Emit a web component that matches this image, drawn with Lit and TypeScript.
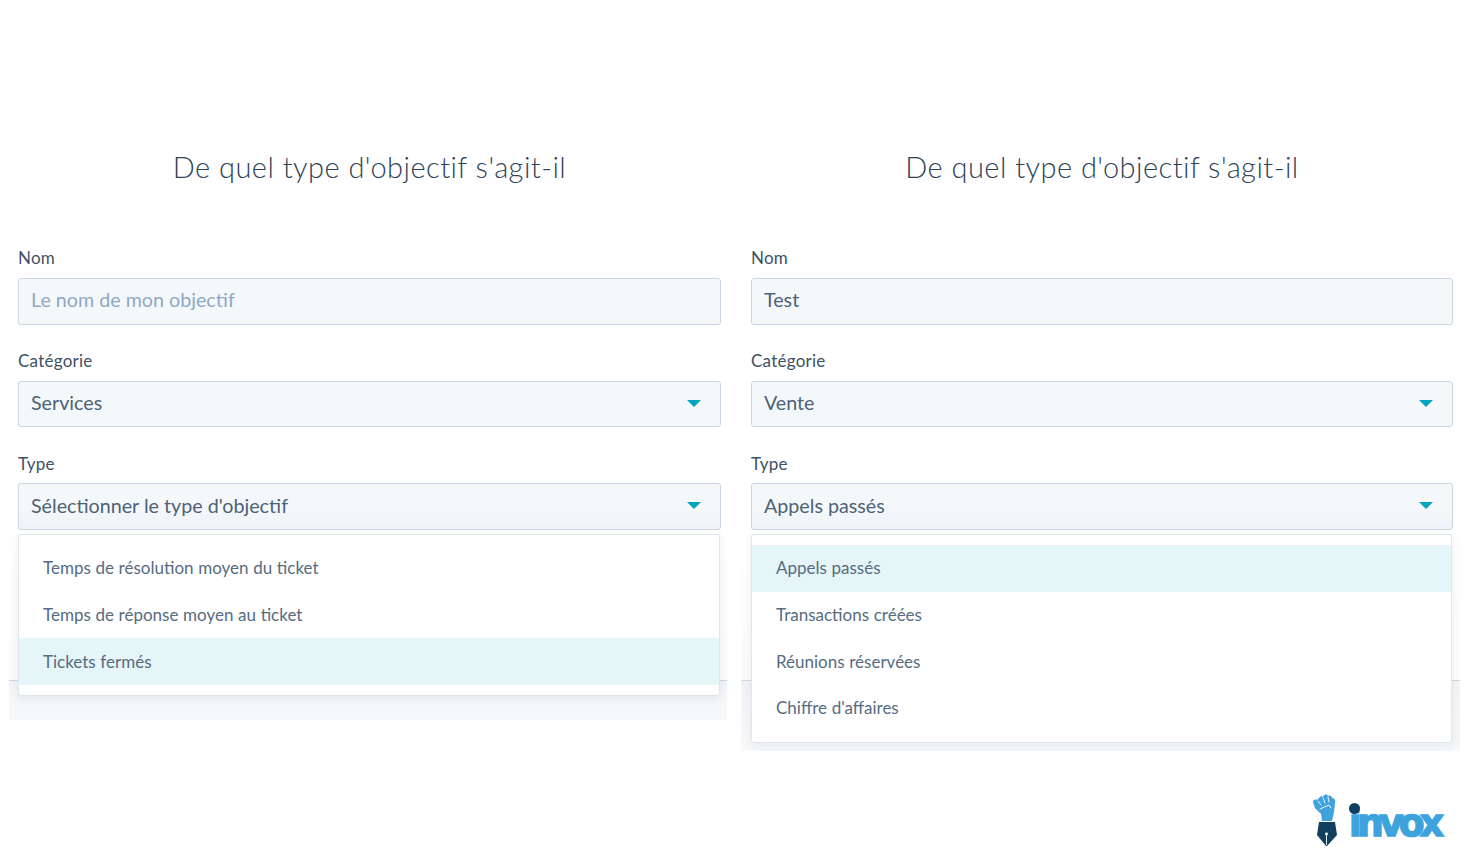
import { LitElement, html, css } from "lit";
import { customElement, property } from "lit/decorators.js";

@customElement("goal-form")
class GoalForm extends LitElement {
  @property() name = "";
  @property({ type: Boolean }) placeholder = false;
  @property() category = "";
  @property() type = "";
  @property({ type: Array }) options: string[] = [];
  @property() selected = "";
  static styles = css`
    :host { display: block; position: relative; height: 530px; padding-top: 148px; box-sizing: border-box; }
    h2 { margin: 0 0 62px; height: 38px; font: 300 29px/38px Lato, sans-serif; color: #2f4357; text-align: center; letter-spacing: 0.46px; white-space: nowrap; }
    .field { height: 102.7px; }
    label { display: block; height: 30px; padding-top: 0.4px; box-sizing: border-box; font: 400 17px/20px Lato, sans-serif; color: #3d5165; letter-spacing: 0.25px; }
    .box { height: 46.7px; box-sizing: border-box; border: 1px solid #cbd6e2; border-radius: 3px; background: #f5f8fa; display: flex; align-items: center; justify-content: space-between; padding: 0 19px 2px 12px; font: 400 19.7px/24px Lato, sans-serif; color: #4d6277; }
    .field.last .box { background: linear-gradient(#f5f8fa 55%, #eff3f7); }
    .ph { color: #8ea9c4; }
    .caret { width: 0; height: 0; border-left: 7px solid transparent; border-right: 7px solid transparent; border-top: 7px solid #00a4bd; }
    .band { position: absolute; z-index: 0; left: -9px; right: -6px; top: 530px; background: linear-gradient(#fff, #f9fafc); }
    :host(:last-of-type) .band { left: -10px; right: -7px; }
    .lower { position: absolute; left: 0; right: 0; top: 150px; bottom: 0; border-top: 1px solid #cfdae6; background: linear-gradient(#f2f4f7, #f6f8fa); }
    .menu { position: absolute; z-index: 1; left: 0; right: 1px; top: 534px; box-sizing: border-box; background: #fff; border: 1px solid #dfe6ee; border-radius: 3px; padding: 10px 0; box-shadow: 0 2px 10px rgba(45, 62, 80, 0.08); }
    .opt { height: 46.7px; box-sizing: border-box; display: flex; align-items: center; padding-left: 24px; font: 400 17px/20px Lato, sans-serif; color: #566c81; word-spacing: 0.3px; }
    .opt.on { background: #e5f5f8; }
  `;
  render() {
    return html`
      <h2>De quel type d'objectif s'agit-il</h2>
      <div class="field"><label>Nom</label><div class="box ${this.placeholder ? "ph" : ""}">${this.name}</div></div>
      <div class="field"><label>Catégorie</label><div class="box">${this.category}<i class="caret"></i></div></div>
      <div class="field last"><label>Type</label><div class="box">${this.type}<i class="caret"></i></div></div>
      <div class="band" style="height:${this.options.length * 31 + 97}px"><div class="lower"></div></div>
      <div class="menu">
        ${this.options.map((o) => html`<div class="opt ${o === this.selected ? "on" : ""}">${o}</div>`)}
      </div>
    `;
  }
}

@customElement("app-root")
class AppRoot extends LitElement {
  static styles = css`
    :host { display: block; width: 1464px; height: 864px; background: #fff; overflow: hidden; }
    .cols { display: grid; grid-template-columns: 703px 702px; gap: 30px; padding-left: 18px; height: 794px; }
    .foot { display: flex; justify-content: flex-end; padding-right: 20px; }
    .logo { display: flex; align-items: flex-start; gap: 11px; }
    svg { display: block; }
    .word { position: relative; width: 95px; height: 42px; margin-top: 9px; font: 700 37px/42px "DejaVu Sans", sans-serif; color: #3ea3dd; -webkit-text-stroke: 1.6px #3ea3dd; letter-spacing: -4.4px; white-space: nowrap; }
    .dot { position: absolute; left: 0; top: 0; width: 11px; height: 11px; border-radius: 50%; background: #123f5f; }
  `;
  render() {
    return html`
      <div class="cols">
        <goal-form name="Le nom de mon objectif" placeholder category="Services" type="Sélectionner le type d'objectif" selected="Tickets fermés"
          .options=${["Temps de résolution moyen du ticket", "Temps de réponse moyen au ticket", "Tickets fermés"]}></goal-form>
        <goal-form name="Test" category="Vente" type="Appels passés" selected="Appels passés"
          .options=${["Appels passés", "Transactions créées", "Réunions réservées", "Chiffre d'affaires"]}></goal-form>
      </div>
      <div class="foot">
        <div class="logo">
          <svg width="26" height="52" viewBox="0 0 26 52">
            <path fill="#3ea3dd" d="M1 8 C1 6 3 5 5 6 L7 4 C8 2 10 2 11 3 C12 0 15 0 16 2 C18 1 20 2 20 4 C22 4 24 6 23 9 L22 18 L20 27 H10 L9 20 L3 14 Z"/>
            <path fill="none" stroke="#fff" stroke-width="0.9" stroke-linecap="round" d="M6 7 L9 11 M11 4 L13 9 M16 3 L17 8 M8 15 L17 11 L19 14"/>
            <path fill="#123f5f" d="M7 28 H23 L25 41 L15 52 H14 L5 41 Z"/>
            <path fill="none" stroke="#fff" stroke-width="0.9" d="M14.5 41 V51"/>
            <circle cx="14.5" cy="40" r="1.4" fill="#fff"/>
          </svg>
          <span class="word">invox<span class="dot"></span></span>
        </div>
      </div>
    `;
  }
}
